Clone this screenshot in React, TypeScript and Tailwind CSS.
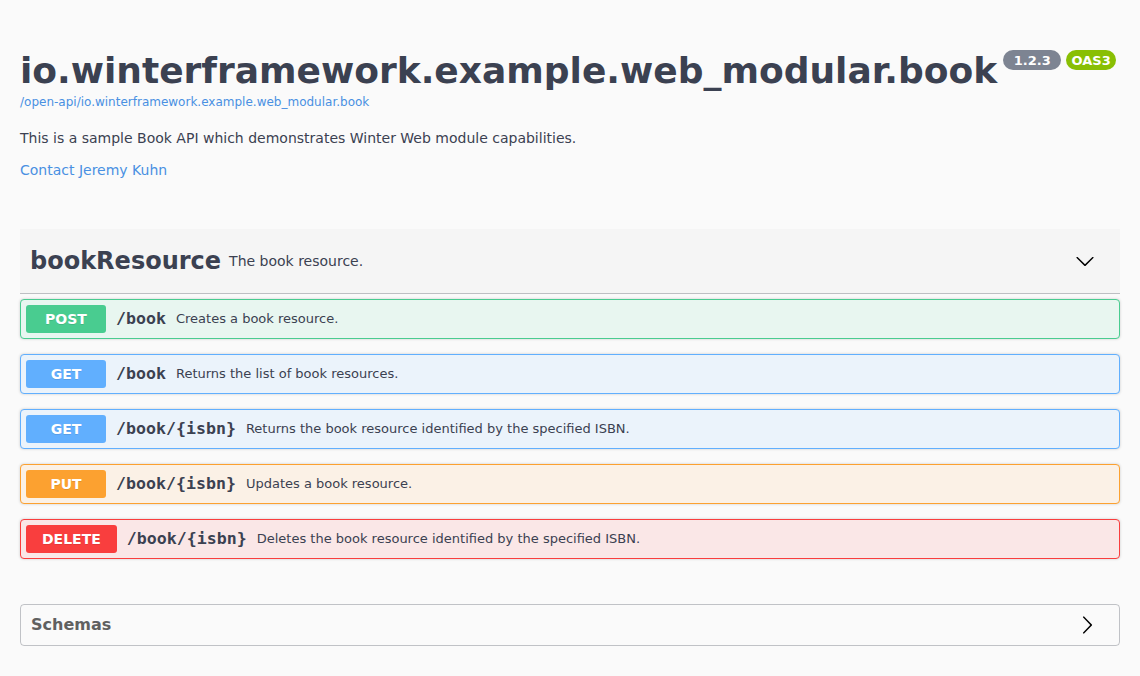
type Method = 'post' | 'get' | 'put' | 'delete';

interface Operation {
  method: Method;
  path: string;
  summary: string;
}

const OPERATIONS: Operation[] = [
  { method: 'post', path: '/book', summary: 'Creates a book resource.' },
  { method: 'get', path: '/book', summary: 'Returns the list of book resources.' },
  { method: 'get', path: '/book/{isbn}', summary: 'Returns the book resource identified by the specified ISBN.' },
  { method: 'put', path: '/book/{isbn}', summary: 'Updates a book resource.' },
  { method: 'delete', path: '/book/{isbn}', summary: 'Deletes the book resource identified by the specified ISBN.' },
];

const METHOD_STYLES: Record<Method, { block: string; badge: string }> = {
  post: { block: 'bg-[#e8f6f0] border-[#49cc90]', badge: 'bg-[#49cc90]' },
  get: { block: 'bg-[#ebf3fb] border-[#61affe]', badge: 'bg-[#61affe]' },
  put: { block: 'bg-[#fbf1e6] border-[#fca130]', badge: 'bg-[#fca130]' },
  delete: { block: 'bg-[#fae7e7] border-[#f93e3e]', badge: 'bg-[#f93e3e]' },
};

function ArrowDown() {
  return (
    <svg width="20" height="20" viewBox="0 0 20 20" fill="#000">
      <path d="M17.418 6.109c.272-.268.709-.268.979 0s.271.701 0 .969l-7.908 7.83c-.27.268-.707.268-.979 0l-7.908-7.83c-.27-.268-.27-.701 0-.969.271-.268.709-.268.979 0L10 13.25l7.418-7.141z" />
    </svg>
  );
}

function ArrowRight() {
  return (
    <svg width="20" height="20" viewBox="0 0 20 20" fill="#000">
      <path d="M13.25 10L6.109 2.58c-.268-.27-.268-.707 0-.979.268-.27.701-.27.969 0l7.83 7.908c.268.271.268.709 0 .979l-7.83 7.908c-.268.271-.701.27-.969 0-.268-.269-.268-.707 0-.979L13.25 10z" />
    </svg>
  );
}

function OpBlock({ op }: { op: Operation }) {
  const style = METHOD_STYLES[op.method];
  return (
    <div
      className={`rounded border ${style.block} shadow-[0_0_3px_rgba(0,0,0,0.19)]`}
    >
      <div className="flex items-center p-[5px]">
        <span
          className={`min-w-[80px] px-[16px] py-[6px] rounded-[3px] text-center text-[14px] leading-[16px] font-bold text-white [text-shadow:0_1px_0_rgba(0,0,0,0.1)] ${style.badge}`}
        >
          {op.method.toUpperCase()}
        </span>
        <span className="px-[10px] text-[16.6px] font-bold text-[#3b4151] font-['DejaVu_Sans_Mono',monospace]">
          {op.path}
        </span>
        <span className="flex-1 text-[13px] text-[#3b4151]">{op.summary}</span>
      </div>
    </div>
  );
}

export default function App() {
  return (
    <div className="min-h-screen bg-[#fafafa] font-['DejaVu_Sans',sans-serif] text-[#3b4151]">
      <div className="flex flex-col px-5 pb-[30px]">
        {/* Info */}
        <div className="pt-[50px] pb-[51px]">
          <h2 className="flex items-start text-[36px] font-bold leading-[42px] text-[#3b4151]">
            <span>io.winterframework.example.web_modular.book</span>
            <span className="ml-[6px] flex gap-[5px]">
              <span className="flex h-[20px] w-[58px] items-center justify-center rounded-full bg-[#7d8492] text-[13px] font-bold leading-none text-white">
                1.2.3
              </span>
              <span className="flex h-[20px] w-[50px] items-center justify-center rounded-full bg-[#89bf04] text-[13px] font-bold leading-none text-white">
                OAS3
              </span>
            </span>
          </h2>
          <a className="mt-[3px] block text-[12px] leading-[14px] text-[#4990e2]">
            /open-api/io.winterframework.example.web_modular.book
          </a>
          <p className="mt-[21px] text-[14px] leading-[16px]">
            This is a sample Book API which demonstrates Winter Web module capabilities.
          </p>
          <a className="mt-[16px] block text-[14px] leading-[16px] text-[#4990e2]">
            Contact Jeremy Kuhn
          </a>
        </div>

        {/* Tag section */}
        <div className="flex flex-col">
          <div className="mb-[5px] flex h-[65px] items-center border-b border-[rgba(59,65,81,0.3)] bg-[#f5f5f5] pl-[10px] pr-[25px]">
            <span className="text-[24px] font-bold leading-[28px]">bookResource</span>
            <span className="flex-1 pl-[8px] text-[14px]">The book resource.</span>
            <ArrowDown />
          </div>
          <div className="flex flex-col gap-[15px]">
            {OPERATIONS.map((op, i) => (
              <OpBlock key={i} op={op} />
            ))}
          </div>
        </div>

        {/* Schemas */}
        <div className="mt-[45px] flex h-[42px] items-center rounded border border-[rgba(59,65,81,0.3)] pl-[10px] pr-[22px]">
          <span className="flex-1 text-[16px] font-bold text-[#606060]">Schemas</span>
          <ArrowRight />
        </div>
      </div>
    </div>
  );
}
